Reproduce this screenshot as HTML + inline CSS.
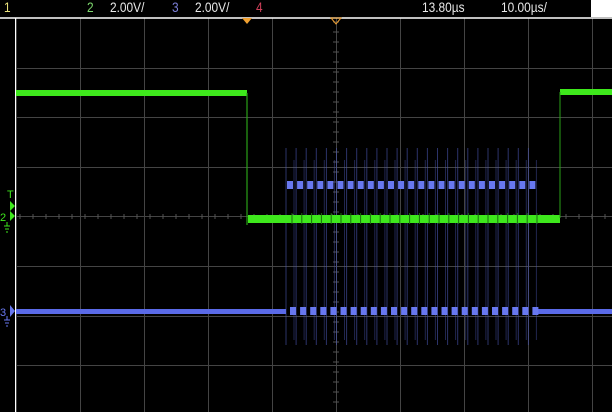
<!DOCTYPE html><html><head><style>
html,body{margin:0;padding:0;background:#000;width:612px;height:412px;overflow:hidden}
.t{position:absolute;top:-1px;font-family:"Liberation Sans",sans-serif;font-size:14px;transform:scaleX(.85);transform-origin:left top}
</style></head><body>
<div style="position:relative;width:612px;height:412px">
<svg id="s" width="612" height="412" style="position:absolute;left:0;top:0"></svg>
<div class="t" style="left:4px;color:#e8e07a">1</div>
<div class="t" style="left:87px;color:#7ed96e">2</div>
<div class="t" style="left:110px;color:#e8e8e8">2.00V/</div>
<div class="t" style="left:172px;color:#7b7fd8">3</div>
<div class="t" style="left:195px;color:#e8e8e8">2.00V/</div>
<div class="t" style="left:256px;color:#d0405a">4</div>
<div class="t" style="left:422px;color:#e8e8e8">13.80µs</div>
<div class="t" style="left:501px;color:#e8e8e8">10.00µs/</div>
<div style="position:absolute;left:591px;top:0;width:21px;height:17px;background:#fff"></div>
</div>
<script>
var s='';
for(var x=16;x<612;x+=64)s+='<line x1="'+(x+.5)+'" y1="18" x2="'+(x+.5)+'" y2="412" stroke="#444" />';
for(var i=1;i<8;i++){var y=Math.round(18+i*49.6)+.5;s+='<line x1="15" y1="'+y+'" x2="612" y2="'+y+'" stroke="#444"/>';}
for(var y=22;y<412;y+=10)s+='<line x1="333" y1="'+y+'" x2="339" y2="'+y+'" stroke="#555"/>';
for(var x=20;x<612;x+=13)s+='<line x1="'+x+'" y1="214" x2="'+x+'" y2="219" stroke="#555"/>';
s+='<line x1="0" y1="18" x2="612" y2="18" stroke="#fff" stroke-width="1.5"/>';
s+='<line x1="15.5" y1="18" x2="15.5" y2="412" stroke="#fff"/>';
for(var i=0;i<25;i++){var x=287+i*10.1;
s+='<line x1="'+(x-1)+'" y1="148" x2="'+(x-1)+'" y2="345" stroke="#4a55b0" opacity=".6"/>';
s+='<line x1="'+(x+7)+'" y1="160" x2="'+(x+7)+'" y2="340" stroke="#4a55b0" opacity=".45"/>';}
s+='<rect x="16" y="90" width="231" height="6" fill="#3ee81c"/>';
s+='<rect x="560" y="89" width="52" height="6" fill="#3ee81c"/>';
s+='<rect x="248" y="215" width="312" height="8" fill="#3ee81c"/>';
s+='<line x1="247" y1="93" x2="247" y2="225" stroke="#2aa018" stroke-width="1.2"/>';
s+='<line x1="560" y1="92" x2="560" y2="218" stroke="#2aa018"/>';
for(var i=0;i<26;i++){var x=292+i*9.8;s+='<line x1="'+x+'" y1="213" x2="'+x+'" y2="224" stroke="#1a6a10" stroke-width="1"/>';}
s+='<rect x="16" y="309" width="270" height="5" fill="#5a6ae8"/>';
s+='<rect x="535" y="309" width="77" height="5" fill="#5a6ae8"/>';
for(var i=0;i<25;i++){var x=287+i*10.1;s+='<rect x="'+x+'" y="181" width="6" height="8" fill="#6878f0"/>';s+='<rect x="'+(x+3)+'" y="307" width="6" height="8" fill="#6878f0"/>';}
s+='<polygon points="242,18 252,18 247,24" fill="#f0a030"/>';
s+='<polygon points="331,18 341,18 336,24" fill="none" stroke="#f0a030"/>';
s+='<text x="7" y="198" fill="#3ee81c" font-family="Liberation Sans" font-size="11">T</text>';
s+='<polygon points="10,201 15,206 10,211" fill="#3ee81c"/>';
s+='<polygon points="10,211 15,216 10,221" fill="#3ee81c"/>';
s+='<text x="0" y="221" fill="#3ee81c" font-family="Liberation Sans" font-size="11">2</text>';
s+='<path d="M4 226h6M5 229h4M6 232h2M7 222v4" stroke="#3ee81c"/>';
s+='<text x="0" y="316" fill="#6878f0" font-family="Liberation Sans" font-size="11">3</text>';
s+='<polygon points="10,305 15,311 10,317" fill="#6878f0"/>';
s+='<path d="M4 320h6M5 323h4M6 326h2M7 316v4" stroke="#6878f0"/>';
document.getElementById('s').innerHTML=s;
</script>
</body></html>
